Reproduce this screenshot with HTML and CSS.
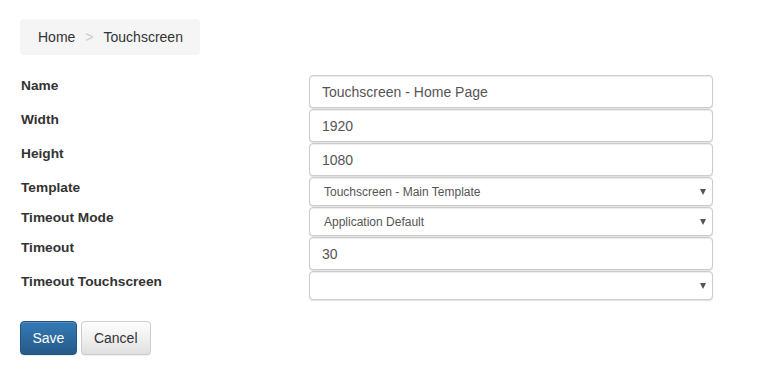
FILE: index.html
```html
<!DOCTYPE html>
<html lang="en">
<head>
    <meta charset="UTF-8">
    <meta name="viewport" content="width=device-width, initial-scale=1.0">
    <title>Touchscreen</title>
    <link rel="stylesheet" href="styles.css">
</head>
<body>
    <ol class="breadcrumb">
        <li>Home</li>
        <li class="active">Touchscreen</li>
    </ol>
    <form class="page-form">
        <div class="form-grid">
            <label for="name">Name</label>
            <input type="text" id="name" class="form-control" value="Touchscreen - Home Page">

            <label for="width">Width</label>
            <input type="text" id="width" class="form-control" value="1920">

            <label for="height">Height</label>
            <input type="text" id="height" class="form-control" value="1080">

            <label for="template">Template</label>
            <div class="select-wrap">
                <select id="template" class="form-select">
                    <option>Touchscreen - Main Template</option>
                </select>
            </div>

            <label for="timeoutMode">Timeout Mode</label>
            <div class="select-wrap">
                <select id="timeoutMode" class="form-select">
                    <option>Application Default</option>
                </select>
            </div>

            <label for="timeout">Timeout</label>
            <input type="text" id="timeout" class="form-control" value="30">

            <label for="timeoutTouch">Timeout Touchscreen</label>
            <div class="select-wrap">
                <select id="timeoutTouch" class="form-select">
                    <option></option>
                </select>
            </div>
        </div>
        <div class="actions">
            <button type="submit" class="btn btn-primary">Save</button>
            <button type="button" class="btn btn-default">Cancel</button>
        </div>
    </form>
</body>
</html>
```

FILE: styles.css
```css
body {
    font-family: "Liberation Sans", Arial, sans-serif;
    font-size: 14px;
    line-height: 20px;
    color: #333;
    background-color: #fff;
    margin: 0;
    padding: 19px 20px;
}

.breadcrumb {
    display: inline-flex;
    list-style: none;
    margin: 0 0 20px 0;
    padding: 8px 17px 8px 18px;
    background-color: #f5f5f5;
    border-radius: 4px;
}

.breadcrumb li + li::before {
    content: ">";
    color: #ccc;
    padding: 0 10px;
}

.page-form {
    margin: 0;
}

.form-grid {
    display: grid;
    grid-template-columns: 289px 404px;
    align-items: start;
}

.form-grid label {
    font-size: 13.7px;
    font-weight: bold;
    line-height: 21px;
    padding-left: 1px;
}

.form-control,
.form-select {
    box-sizing: border-box;
    width: 100%;
    font-family: inherit;
    color: #555;
    background-color: #fff;
    border: 1px solid #ccc;
    border-radius: 4px;
    box-shadow: inset 0 1px 1px rgba(0, 0, 0, 0.075), 0 1px 1px rgba(0, 0, 0, 0.12);
    margin: 0 0 1px 0;
}

.form-control {
    height: 33px;
    font-size: 14px;
    padding: 6px 12px;
}

.select-wrap {
    position: relative;
}

.select-wrap::after {
    content: "";
    position: absolute;
    right: 7px;
    top: 12px;
    border-left: 3px solid transparent;
    border-right: 3px solid transparent;
    border-top: 6px solid #555;
}

.form-select {
    appearance: none;
    -webkit-appearance: none;
    height: 29px;
    font-size: 12px;
    padding: 0 20px 0 14px;
}

.actions {
    margin-top: 20px;
    display: flex;
    gap: 4px;
}

.btn {
    font-family: inherit;
    font-size: 14px;
    line-height: 20px;
    height: 34px;
    padding: 6px 12px;
    border-radius: 4px;
    cursor: pointer;
}

.btn-primary {
    color: #fff;
    padding: 6px 11.5px;
    background-image: linear-gradient(to bottom, #337ab7 0, #265a88 100%);
    border: 1px solid #245580;
    box-shadow: inset 0 1px 0 rgba(255, 255, 255, 0.15), 0 1px 1px rgba(0, 0, 0, 0.075);
}

.btn-default {
    color: #333;
    background-image: linear-gradient(to bottom, #fff 0, #e0e0e0 100%);
    border: 1px solid #ccc;
    box-shadow: inset 0 1px 0 rgba(255, 255, 255, 0.15), 0 1px 1px rgba(0, 0, 0, 0.075);
}
```
